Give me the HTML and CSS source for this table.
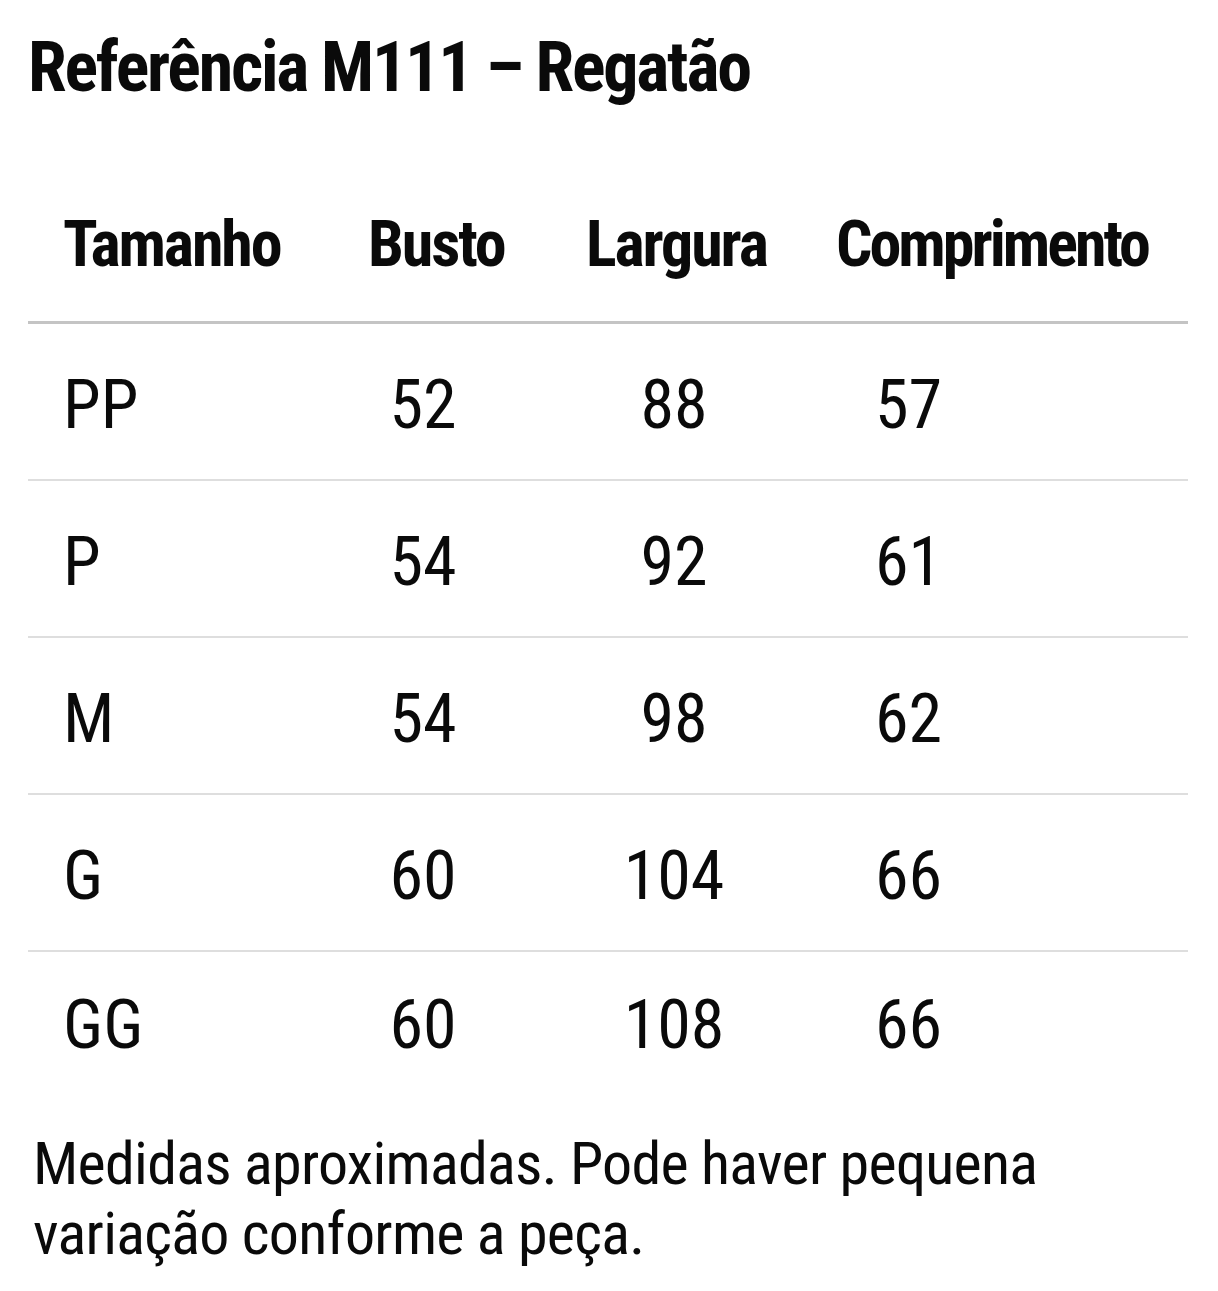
FILE: index.html
```html
<!DOCTYPE html>
<html lang="pt-BR">
<head>
<meta charset="utf-8">
<title>Referência M111 – Regatão</title>
<link rel="stylesheet" href="styles.css">
</head>
<body>
<main class="page">
  <h1 class="title">Referência M111 – Regatão</h1>
  <div class="table">
    <div class="row head">
      <div class="c1">Tamanho</div>
      <div class="c2">Busto</div>
      <div class="c3">Largura</div>
      <div class="c4">Comprimento</div>
    </div>
    <div class="row">
      <div class="c1">PP</div><div class="c2">52</div><div class="c3">88</div><div class="c4">57</div>
    </div>
    <div class="row">
      <div class="c1">P</div><div class="c2">54</div><div class="c3">92</div><div class="c4">61</div>
    </div>
    <div class="row">
      <div class="c1">M</div><div class="c2">54</div><div class="c3">98</div><div class="c4">62</div>
    </div>
    <div class="row">
      <div class="c1">G</div><div class="c2">60</div><div class="c3">104</div><div class="c4">66</div>
    </div>
    <div class="row last">
      <div class="c1">GG</div><div class="c2">60</div><div class="c3">108</div><div class="c4">66</div>
    </div>
  </div>
  <p class="note">Medidas aproximadas. Pode haver pequena variação conforme a peça.</p>
</main>
</body>
</html>
```
FILE: styles.css
```css
html, body {
  margin: 0;
  padding: 0;
  background: #ffffff;
}
body {
  font-family: Roboto, "Liberation Sans", sans-serif;
  font-stretch: 75%;
  color: #0a0a0a;
}
.page {
  padding-top: 32px;
}
.title {
  margin: 0;
  padding-left: 28px;
  font-size: 70px;
  line-height: 70px;
  font-weight: 700;
  font-stretch: 75%;
  letter-spacing: -2.2px;
}
.table {
  margin: 110px 30px 0 28px;
}
.row {
  display: grid;
  grid-template-columns: 290px 210px 292px 1fr;
  font-size: 68px;
  line-height: 68px;
  padding: 47px 0 40px;
  border-bottom: 2px solid #dedede;
}
.row.last {
  border-bottom: none;
  padding-top: 39px;
}
.row .c1 { padding-left: 35px; }
.row .c2 { text-align: center; }
.row .c3 { text-align: center; }
.row .c4 { padding-left: 55px; }
.row.head {
  font-size: 64px;
  line-height: 66px;
  font-weight: 700;
  letter-spacing: -2.1px;
  padding: 0 0 43px;
  border-bottom: 3px solid #c4c4c4;
}
.row.head .c2, .row.head .c3 { text-align: left; }
.row.head .c2 { padding-left: 50px; }
.row.head .c3 { padding-left: 58px; }
.row.head .c4 { padding-left: 16px; letter-spacing: -3px; }
.note {
  margin: 30px 0 0;
  padding-left: 33px;
  width: 1040px;
  font-size: 60px;
  line-height: 70px;
  letter-spacing: -0.7px;
}
```
